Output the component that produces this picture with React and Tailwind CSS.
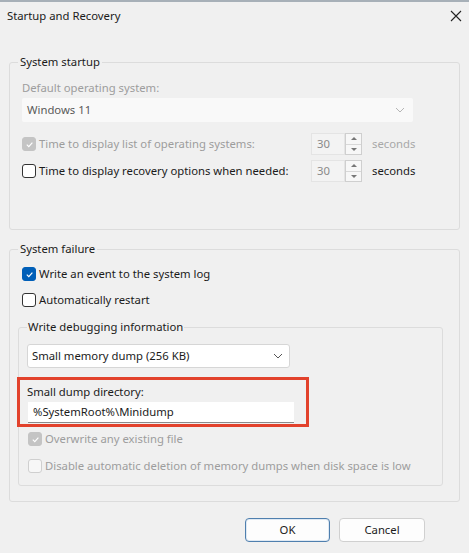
import React from "react";

const Check = ({ checked, disabled }) => {
  let box = "border-[#333] bg-white";
  if (checked && !disabled) box = "border-[#005fb8] bg-[#005fb8]";
  if (checked && disabled) box = "border-[#c4c4c4] bg-[#c4c4c4]";
  if (!checked && disabled) box = "border-[#cfcfcf] bg-[#f7f7f7]";
  return (
    <span className={`flex h-[14px] w-[14px] shrink-0 items-center justify-center rounded-[3px] border ${box}`}>
      {checked && (
        <svg width="9" height="9" viewBox="0 0 10 10" fill="none">
          <path d="M2 5.2 L4.2 7.3 L8.2 2.8" stroke="white" strokeWidth="1.3" />
        </svg>
      )}
    </span>
  );
};

const Chevron = ({ color }) => (
  <svg width="10" height="6" viewBox="0 0 10 6" fill="none">
    <path d="M1 1 L5 5 L9 1" stroke={color} strokeWidth="1" />
  </svg>
);

const Spinner = () => (
  <div className="flex h-[22px]">
    <div className="flex w-[34px] items-center border border-[#e4e4e4] bg-[#f3f3f3] pl-[5px] text-[#8a8a8a]">30</div>
    <div className="flex w-[17px] flex-col border border-[#cfcfcf] bg-[#f7f7f7]">
      <div className="flex flex-1 items-center justify-center border-b border-[#d8d8d8]">
        <span className="h-0 w-0 border-x-[3px] border-b-[3px] border-x-transparent border-b-[#777]"></span>
      </div>
      <div className="flex flex-1 items-center justify-center">
        <span className="h-0 w-0 border-x-[3px] border-t-[3px] border-x-transparent border-t-[#777]"></span>
      </div>
    </div>
  </div>
);

export default function App() {
  return (
    <div className="h-[553px] w-[469px] overflow-hidden border-t-2 border-[#a7b0b8] bg-[#f0f0f0] text-[11.3px] leading-[16px] text-[#1b1b1b] [font-family:'Noto_Sans',sans-serif]">
      <div className="flex h-[28px] items-center justify-between pl-[7px] pr-[7px]">
        <span>Startup and Recovery</span>
        <svg width="12" height="12" viewBox="0 0 12 12" fill="none">
          <path d="M1 1 L11 11 M11 1 L1 11" stroke="#222" strokeWidth="1.1" />
        </svg>
      </div>

      <fieldset className="mx-[9px] mt-[24px] h-[176px] rounded-[3px] border border-[#dcdcdc] pl-[12px] pr-[13px]">
        <legend className="-ml-[4px] px-[2px]">System startup</legend>
        <div className="mt-[10px] text-[#9d9d9d]">Default operating system:</div>
        <div className="mt-[2px] flex h-[24px] w-[391px] items-center justify-between rounded-[2px] bg-[#f9f9f9] pl-[5px] pr-[8px] text-[#5a5a5a]">
          <span>Windows 11</span>
          <Chevron color="#b5b5b5" />
        </div>
        <div className="mt-[11px] flex items-center">
          <Check checked disabled />
          <span className="ml-[3px] w-[272px] text-[#9d9d9d]">Time to display list of operating systems:</span>
          <Spinner />
          <span className="ml-[10px] text-[#a8a8a8]">seconds</span>
        </div>
        <div className="mt-[5px] flex items-center">
          <Check />
          <span className="ml-[3px] w-[272px]">Time to display recovery options when needed:</span>
          <Spinner />
          <span className="ml-[10px]">seconds</span>
        </div>
      </fieldset>

      <fieldset className="mx-[9px] mt-[11px] h-[261px] rounded-[3px] border border-[#dcdcdc] px-[8px]">
        <legend className="ml-0 px-[2px]">System failure</legend>
        <div className="ml-[4px] mt-[9px] flex items-center">
          <Check checked />
          <span className="ml-[3px]">Write an event to the system log</span>
        </div>
        <div className="ml-[4px] mt-[10px] flex items-center">
          <Check />
          <span className="ml-[3px]">Automatically restart</span>
        </div>

        <fieldset className="mr-[8px] mt-[11px] h-[167px] rounded-[3px] border border-[#dcdcdc] px-[8px]">
          <legend className="px-[1px]">Write debugging information</legend>
          <div className="mt-[9px] flex h-[24px] w-[263px] items-center justify-between rounded-[3px] border border-[#d6d6d6] bg-white pl-[4px] pr-[6px]">
            <span>Small memory dump (256 KB)</span>
            <Chevron color="#555" />
          </div>
          <div className="-ml-[10px] mt-[9px] h-[50px] w-[292px] border-[3px] border-[#e2422c] pl-[7px] pt-[4px]">
            <div>Small dump directory:</div>
            <div className="ml-[1px] mt-[2px] flex h-[21px] w-[266px] items-center border-b border-[#8a8a8a] bg-white pl-[5px]">%SystemRoot%\Minidump</div>
          </div>
          <div className="ml-[1px] mt-[4px] flex items-center text-[#9d9d9d]">
            <Check checked disabled />
            <span className="ml-[3px]">Overwrite any existing file</span>
          </div>
          <div className="ml-[1px] mt-[11px] flex items-center text-[#9d9d9d]">
            <Check disabled />
            <span className="ml-[3px]">Disable automatic deletion of memory dumps when disk space is low</span>
          </div>
        </fieldset>
      </fieldset>

      <div className="mt-[16px] flex justify-end gap-[9px] pr-[44px]">
        <button className="h-[24px] w-[85px] rounded-[4px] border border-[#4f7fae] bg-[#fdfdfd] shadow-[inset_0_0_0_1px_#dfe9f3]">OK</button>
        <button className="h-[24px] w-[86px] rounded-[4px] border border-[#d0d0d0] bg-[#fdfdfd]">Cancel</button>
      </div>
    </div>
  );
}
